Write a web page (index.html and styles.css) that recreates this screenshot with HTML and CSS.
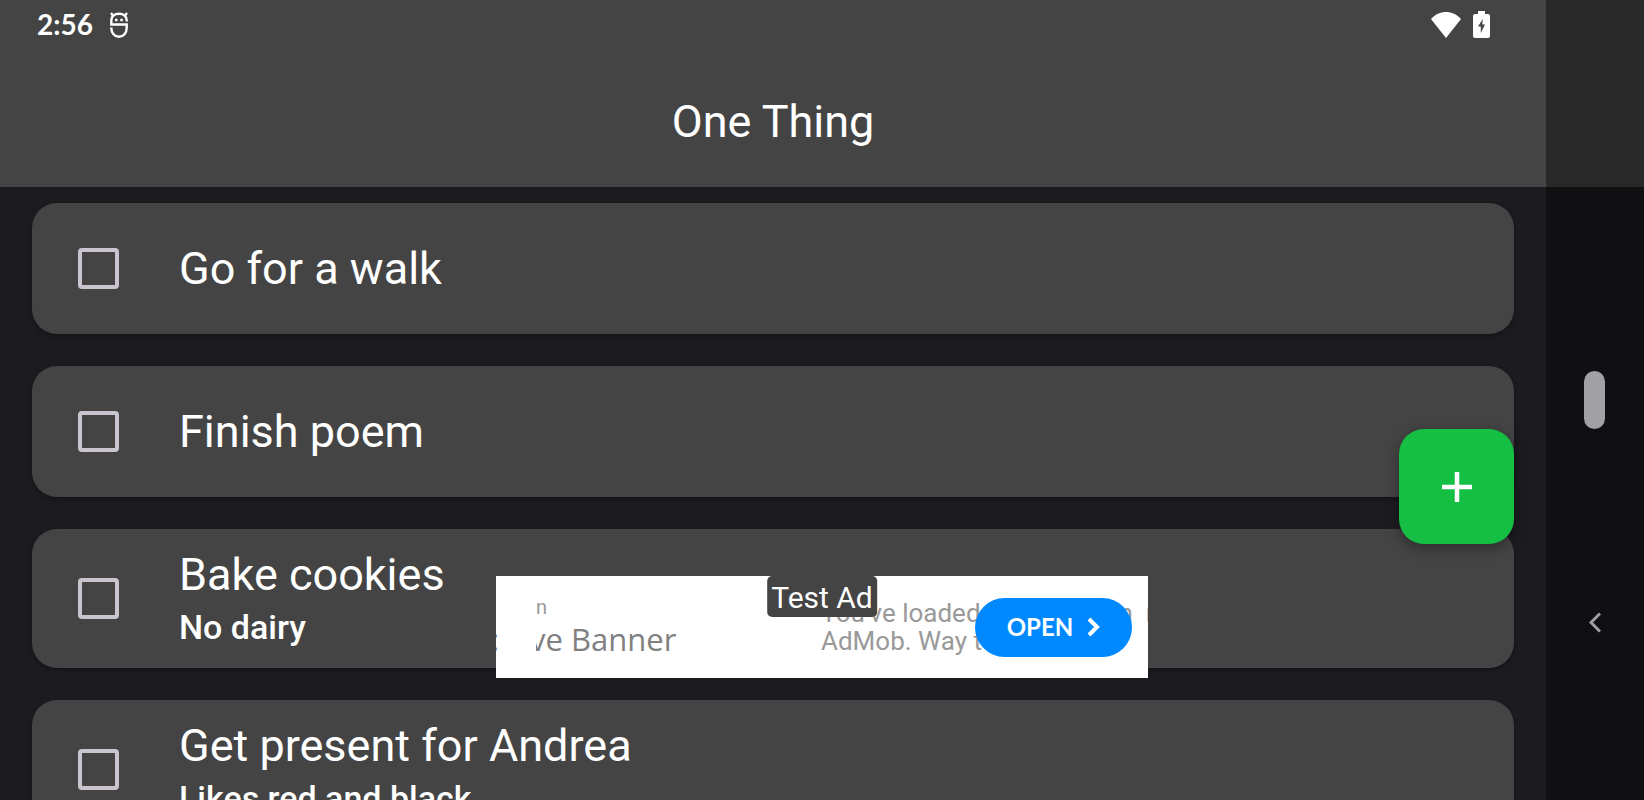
FILE: index.html
```html
<!DOCTYPE html>
<html lang="en">
<head>
<meta charset="utf-8">
<meta name="viewport" content="width=device-width, initial-scale=1">
<title>One Thing</title>
<link rel="stylesheet" href="styles.css">
</head>
<body>
<div class="screen">
  <header class="top">
    <div class="status">
      <time class="clock">2:56</time>
      <svg class="debug-icon" viewBox="0 0 20 28" fill="none" stroke="#fff" stroke-width="2.4" aria-hidden="true">
        <path d="M17.700 10.500V9.500C17.700 5 14.500 2.800 10 2.800S2.300 5 2.300 9.500V13.500H17.700V17C17.700 22 14.500 25.800 10 25.800S2.300 22 2.300 17V16.500"/>
        <path d="M4.300 5L2 2M15.700 5L18 2" stroke-width="2.400"/>
        <path d="M6 9H8.500M11.300 9H13.800" stroke-width="2.400"/>
      </svg>
      <div class="status-right">
        <svg class="wifi" viewBox="0 0 30 26" aria-hidden="true"><path fill="#fff" d="M15 26L0 7C4 2.500 9.500 0 15 0S26 2.500 30 7Z"/></svg>
        <svg class="battery" viewBox="0 0 17 27" aria-hidden="true"><path fill="#fff" fill-rule="evenodd" d="M5 0H12V3H15Q17 3 17 5V25Q17 27 15 27H2Q0 27 0 25V5Q0 3 2 3H5ZM9.800 8L5 15.500H7.800V22L12 13.500H9.300Z"/></svg>
      </div>
    </div>
    <h1 class="title">One Thing</h1>
  </header>

  <main class="list">
    <label class="card"><input class="check" type="checkbox"><span class="text"><span class="name">Go for a walk</span></span></label>
    <label class="card"><input class="check" type="checkbox"><span class="text"><span class="name">Finish poem</span></span></label>
    <label class="card"><input class="check" type="checkbox"><span class="text"><span class="name">Bake cookies</span><span class="note">No dairy</span></span></label>
    <label class="card"><input class="check" type="checkbox"><span class="text"><span class="name">Get present for Andrea</span><span class="note">Likes red and black</span></span></label>
  </main>

  <button class="fab" type="button" aria-label="Add">
    <svg viewBox="0 0 30 30" aria-hidden="true"><path d="M15 0V30M0 15H30" stroke="#fff" stroke-width="4.500"/></svg>
  </button>

  <aside class="ad">
    <span class="ad-edge">:</span>
    <div class="ad-head"><span class="ad-small">n</span><span class="ad-large">ve Banner</span></div>
    <div class="ad-body"><p class="ad-line"><span>You've loaded</span><span>n&nbsp; r</span></p><p class="ad-line">AdMob. Way to</p></div>
    <span class="ad-tag">Test Ad</span>
    <button class="open" type="button">OPEN
      <svg viewBox="0 0 13 20" fill="none" aria-hidden="true"><path d="M2 2L10 10L2 18" stroke="#fff" stroke-width="4"/></svg>
    </button>
  </aside>

  <nav class="nav">
    <button class="home" type="button" aria-label="Home"></button>
    <button class="back" type="button" aria-label="Back">
      <svg viewBox="0 0 12 21" fill="none" aria-hidden="true"><path d="M11 1.500L2 10.500L11 19.500" stroke="#a1a1a3" stroke-width="3"/></svg>
    </button>
  </nav>
</div>
</body>
</html>
```

FILE: styles.css
```css
* { box-sizing: border-box; }

body {
  margin: 0;
  background: #1c1b20;
  color: #fff;
  font-family: Roboto, "Liberation Sans", sans-serif;
}

button {
  border: 0;
  padding: 0;
  font: inherit;
  color: inherit;
}

svg { display: block; }

.screen {
  position: relative;
  height: 100vh;
  overflow: hidden;
}

.top {
  display: flex;
  flex-direction: column;
  height: 187px;
  padding-right: 98px;
  background: #444;
}

.status {
  display: flex;
  align-items: center;
  height: 49px;
  padding: 0 56px 0 37px;
}

.clock {
  padding-bottom: 2px;
  font: 700 28px/46px Lato, sans-serif;
}

.debug-icon { width: 20px; height: 28px; margin-left: 16px; }

.status-right {
  display: flex;
  align-items: center;
  gap: 12px;
  margin-left: auto;
}

.wifi { width: 30px; height: 26px; }
.battery { width: 17px; height: 27px; }

.title {
  margin: 44px 0 0;
  font-size: 45px;
  font-weight: 400;
  line-height: 57px;
  text-align: center;
}

.list {
  display: flex;
  flex-direction: column;
  gap: 32px;
  padding: 16px 130px 0 32px;
}

.card {
  display: flex;
  align-items: center;
  gap: 60px;
  min-height: 131px;
  padding: 17px 46px;
  border-radius: 25px;
  background: #444;
  box-shadow: 0 2px 4px rgba(0, 0, 0, .3);
}

.check {
  appearance: none;
  flex: none;
  width: 41px;
  height: 41px;
  margin: 0;
  border: 4px solid #cac4d0;
  border-radius: 4px;
}

.text { display: flex; flex-direction: column; }
.name { font-size: 45px; line-height: 57px; }
.note { font-size: 34px; font-weight: 500; line-height: 48px; }

.fab {
  position: absolute;
  right: 130px;
  bottom: 256px;
  display: grid;
  place-items: center;
  width: 115px;
  height: 115px;
  border-radius: 25px;
  background: #14bf44;
  box-shadow: 0 4px 14px rgba(0, 0, 0, .35);
}

.fab svg { width: 30px; height: 30px; }

.ad {
  position: absolute;
  bottom: 122px;
  left: 50%;
  display: flex;
  width: 652px;
  height: 102px;
  margin-left: -326px;
  overflow: hidden;
  background: #fff;
}

.ad-edge,
.ad-large {
  color: #808080;
  font: 400 31px/40px "Open Sans", sans-serif;
}

.ad-edge {
  flex: none;
  width: 45px;
  margin-left: -5px;
  padding-top: 43px;
}

.ad-head {
  display: flex;
  flex: none;
  flex-direction: column;
  width: 285px;
  padding-top: 19px;
  overflow: hidden;
}

.ad-small { color: #999; font-size: 20px; line-height: 24px; }
.ad-large { margin-left: -6px; }

.ad-body { flex: none; padding-top: 23px; }

.ad-line {
  display: flex;
  gap: 138px;
  margin: 0;
  color: #999;
  font-size: 26px;
  line-height: 28px;
  white-space: nowrap;
}

.ad-tag {
  position: absolute;
  top: 0;
  left: 50%;
  padding: 4px 4px 1px;
  border-radius: 5px;
  background: #444;
  font-size: 30px;
  line-height: 36px;
  transform: translateX(-50%);
}

.open {
  position: absolute;
  top: 22px;
  right: 16px;
  display: flex;
  align-items: center;
  justify-content: center;
  gap: 14px;
  width: 157px;
  height: 59px;
  padding-bottom: 1px;
  border-radius: 30px;
  background: #0088ff;
  font: 700 24px/30px Lato, sans-serif;
}

.open svg { width: 13px; height: 20px; }

.nav {
  position: absolute;
  top: 0;
  right: 0;
  bottom: 0;
  display: grid;
  grid-template-rows: 1fr 58px 1fr;
  justify-items: center;
  width: 98px;
  padding-right: 1px;
  background: rgba(0, 0, 0, .4);
}

.home {
  grid-row: 2;
  width: 21px;
  height: 58px;
  border-radius: 11px;
  background: #a1a1a3;
}

.back {
  grid-row: 3;
  place-self: center;
  margin-top: 15px;
  background: none;
}

.back svg { width: 12px; height: 21px; }
```
